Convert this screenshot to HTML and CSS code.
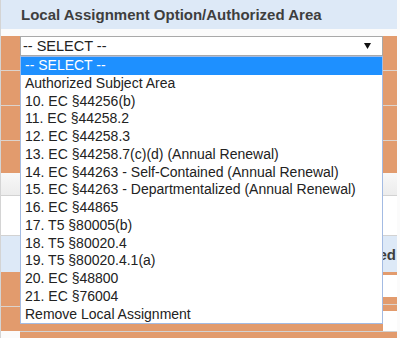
FILE: index.html
```html
<!DOCTYPE html>
<html>
<head>
<meta charset="utf-8">
<link rel="stylesheet" href="styles.css">
</head>
<body>
<div class="panel">
  <div class="hdr">Local Assignment Option/Authorized Area</div>
  <div class="orow">
    <div class="select"><span>-- SELECT --</span><svg class="arrow" width="7" height="6" viewBox="0 0 7 6"><path d="M0 0H7L3.5 6Z" fill="#111"/></svg></div>
  </div>
  <div class="orow"></div>
  <div class="orow"></div>
  <div class="orow last"></div>
  <div class="grow"></div>
  <div class="wrow"></div>
  <div class="brow"><span>Authorized</span></div>
  <div class="lower">
    <div class="lower-left"><div class="ll1"></div><div class="ll2"></div></div>
    <div class="lower-right">
      <div class="lr-o1"></div><div class="lr-w1"></div><div class="lr-o2"></div><div class="lr-o3"></div><div class="lr-w2"></div>
    </div>
  </div>
  <div class="foot"></div>
  <ul class="dropdown">
    <li class="sel">-- SELECT --</li>
    <li>Authorized Subject Area</li>
    <li>10. EC §44256(b)</li>
    <li>11. EC §44258.2</li>
    <li>12. EC §44258.3</li>
    <li>13. EC §44258.7(c)(d) (Annual Renewal)</li>
    <li>14. EC §44263 - Self-Contained (Annual Renewal)</li>
    <li>15. EC §44263 - Departmentalized (Annual Renewal)</li>
    <li>16. EC §44865</li>
    <li>17. T5 §80005(b)</li>
    <li>18. T5 §80020.4</li>
    <li>19. T5 §80020.4.1(a)</li>
    <li>20. EC §48800</li>
    <li>21. EC §76004</li>
    <li>Remove Local Assignment</li>
  </ul>
</div>
</body>
</html>
```
FILE: styles.css
```css
html, body {
  margin: 0;
  padding: 0;
  background: #fbfbfb;
  font-family: "Liberation Sans", Arial, sans-serif;
}
.panel {
  position: relative;
  width: 396px;
  border-left: 1px solid #d4d4d4;
  height: 338px;
}
.hdr {
  height: 29px;
  line-height: 29px;
  background: #dde9f7;
  padding-left: 20px;
  font-weight: bold;
  font-size: 15px;
  color: #3e3e3e;
}
.orow {
  height: 34px;
  background: #e29b6d;
  border-bottom: 1px solid #dcd3cd;
}
.orow.last {
  height: 32px;
  border-bottom: none;
}
.select {
  margin: 7px 0 0 19px;
  width: 363px;
  height: 20px;
  box-sizing: border-box;
  border: 1px solid #a9a9a9;
  background: #fff;
  display: flex;
  align-items: center;
  justify-content: space-between;
  padding: 0 11px 0 2px;
  font-size: 14.5px;
  color: #222;
}
.arrow {
  display: block;
}
.grow {
  height: 22px;
  background: linear-gradient(#f8f8f8, #ececec);
  border-bottom: 1px solid #d2d2d2;
}
.wrow {
  height: 39px;
  background: #fff;
  border-bottom: 1px solid #d2d2d2;
}
.brow {
  height: 36px;
  background: #dde9f7;
  display: flex;
  align-items: center;
  justify-content: flex-end;
  padding-right: 1px;
  font-weight: bold;
  font-size: 15px;
  color: #3e3e3e;
}
.lower {
  display: grid;
  grid-template-columns: 1fr 14px;
  height: 59px;
}
.lower-left {
  background: #e29b6d;
}
.ll1 {
  height: 34px;
  border-bottom: 1px solid #dcd3cd;
}
.lower-right {
  display: flex;
  flex-direction: column;
}
.lr-o1 { height: 3px; background: #e29b6d; }
.lr-w1 { height: 22px; background: #fff; }
.lr-o2 { height: 7px; background: #e29b6d; border-bottom: 1px solid #dcd3cd; }
.lr-o3 { height: 6px; background: #e29b6d; }
.lr-w2 { flex: 1; background: #fff; }
.foot {
  border-top: 1px solid #d2d2d2;
  height: 8px;
  margin-left: 19px;
  background: #e29b6d;
}
.dropdown {
  position: absolute;
  left: 19px;
  top: 56px;
  width: 363px;
  box-sizing: border-box;
  margin: 0;
  padding: 0;
  list-style: none;
  background: #fff;
  border: 1px solid #a3bbe3;
  font-size: 14px;
  color: #222;
}
.dropdown li {
  height: 17.75px;
  line-height: 17.75px;
  padding-left: 4px;
  white-space: nowrap;
}
.dropdown li.sel {
  background: #1e90ff;
  color: #fff;
}
```
